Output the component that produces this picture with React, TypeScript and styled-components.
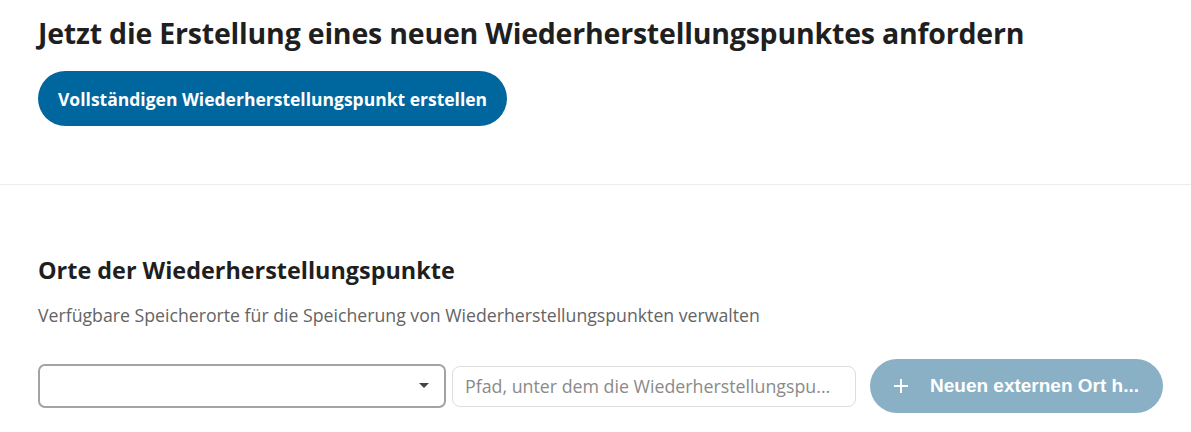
import React from 'react';
import styled, { createGlobalStyle } from 'styled-components';

const GlobalStyle = createGlobalStyle`
  html, body {
    margin: 0;
    padding: 0;
    background: #ffffff;
  }
  body {
    font-family: 'Open Sans', 'Noto Sans', sans-serif;
    color: #1f1f1f;
  }
`;

const Page = styled.div`
  width: 1191px;
  display: flex;
  flex-direction: column;
`;

const Section = styled.section<{ $pad: string }>`
  display: flex;
  flex-direction: column;
  align-items: flex-start;
  padding: ${(p) => p.$pad};
`;

const Divider = styled.hr`
  width: 100%;
  margin: 0;
  border: none;
  border-top: 1px solid #ececec;
`;

const Title = styled.h2`
  margin: 0;
  font-size: 28.5px;
  font-weight: 700;
  line-height: 36px;
  color: #1f1f1f;
  letter-spacing: -0.2px;
`;

const SubTitle = styled.h3`
  margin: 0;
  font-size: 23.4px;
  font-weight: 700;
  line-height: 30px;
  color: #1f1f1f;
`;

const Description = styled.p`
  margin: 18px 0 0;
  font-size: 17.7px;
  line-height: 24px;
  color: #646464;
`;

const PrimaryButton = styled.button`
  margin-top: 20px;
  height: 55px;
  padding: 0 20px;
  border: none;
  border-radius: 28px;
  background-color: #00669e;
  color: #ffffff;
  font-family: 'Open Sans', sans-serif;
  font-size: 17.5px;
  font-weight: 700;
  cursor: pointer;
`;

const Row = styled.div`
  margin-top: 32px;
  display: flex;
  align-items: center;
  gap: 6px;
`;

const Select = styled.div`
  position: relative;
  width: 408px;
  height: 44px;
  box-sizing: border-box;
  border: 2px solid #a3a3a3;
  border-radius: 7px;
  background: #ffffff;
`;

const Caret = styled.span`
  position: absolute;
  right: 15px;
  top: 17px;
  width: 0;
  height: 0;
  border-left: 5px solid transparent;
  border-right: 5px solid transparent;
  border-top: 5px solid #444444;
`;

const PathInput = styled.input`
  width: 404px;
  height: 41px;
  box-sizing: border-box;
  padding: 0 12px;
  border: 1px solid #dddddd;
  border-radius: 8px;
  font-family: 'Open Sans', sans-serif;
  font-size: 17.8px;
  color: #333;
  outline: none;

  &::placeholder {
    color: #8a8a8a;
  }
`;

const AddButton = styled.button`
  margin-left: 8px;
  height: 54px;
  width: 293px;
  padding: 0 0 0 23px;
  display: flex;
  align-items: center;
  gap: 21px;
  border: none;
  border-radius: 27px;
  background-color: #8ab0c5;
  color: #ffffff;
  font-family: 'Liberation Sans', Arial, sans-serif;
  font-size: 19px;
  font-weight: 700;
  white-space: nowrap;
  cursor: default;
`;

const PlusIcon = () => (
  <svg width="16" height="16" viewBox="0 0 16 16" fill="none">
    <path d="M8 1v14M1 8h14" stroke="#ffffff" strokeWidth="2" />
  </svg>
);

const App: React.FC = () => {
  return (
    <>
      <GlobalStyle />
      <Page>
        <Section $pad="15px 38px 58px">
          <Title>Jetzt die Erstellung eines neuen Wiederherstellungspunktes anfordern</Title>
          <PrimaryButton>Vollständigen Wiederherstellungspunkt erstellen</PrimaryButton>
        </Section>
        <Divider />
        <Section $pad="70px 38px 20px">
          <SubTitle>Orte der Wiederherstellungspunkte</SubTitle>
          <Description>Verfügbare Speicherorte für die Speicherung von Wiederherstellungspunkten verwalten</Description>
          <Row>
            <Select>
              <Caret />
            </Select>
            <PathInput placeholder="Pfad, unter dem die Wiederherstellungspu..." />
            <AddButton disabled>
              <PlusIcon />
              Neuen externen Ort h...
            </AddButton>
          </Row>
        </Section>
      </Page>
    </>
  );
};

export default App;
